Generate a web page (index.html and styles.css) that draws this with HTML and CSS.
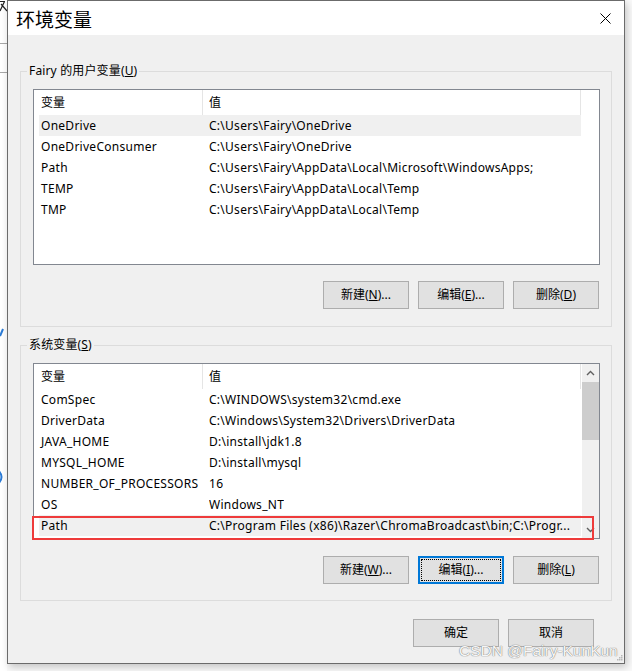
FILE: index.html
```html
<!DOCTYPE html>
<html lang="zh-CN">
<head>
<meta charset="utf-8">
<title>环境变量</title>
<link rel="stylesheet" href="styles.css">
</head>
<body>
<div class="desk">
  <div class="behind">
    <svg class="behind-glyph" width="7" height="12" viewBox="0 0 7 12"><path d="M0 1.5 H5 M4.5 1.5 L0 11 M1 4 L7 11" stroke="#222" stroke-width="1.2" fill="none"/></svg>
    <div class="behind-line l1"></div>
    <div class="behind-line l2"></div>
    <svg class="behind-blue b1" width="4" height="10" viewBox="0 0 4 10"><path d="M0 9 L3 2" stroke="#2b7bd6" stroke-width="2" fill="none"/></svg>
    <svg class="behind-blue b2" width="6" height="14" viewBox="0 0 6 14"><path d="M1 1 Q6 7 1 13" stroke="#2b7bd6" stroke-width="2" fill="none"/></svg>
  </div>
  <div class="window">
    <div class="titlebar">
      <span class="title">环境变量</span>
      <svg class="close" width="11" height="11" viewBox="0 0 11 11"><path d="M0.5 0.5 L10.5 10.5 M10.5 0.5 L0.5 10.5" stroke="#000" stroke-width="1" fill="none"/></svg>
    </div>
    <div class="content">
      <fieldset class="group">
        <legend>Fairy 的用户变量(<u>U</u>)</legend>
        <div class="list">
          <div class="list-main">
            <div class="list-head"><div class="hcell c1">变量</div><div class="hcell c2">值</div></div>
            <div class="row sel"><span class="name">OneDrive</span><span class="val">C:\Users\Fairy\OneDrive</span></div>
            <div class="row"><span class="name">OneDriveConsumer</span><span class="val">C:\Users\Fairy\OneDrive</span></div>
            <div class="row"><span class="name">Path</span><span class="val">C:\Users\Fairy\AppData\Local\Microsoft\WindowsApps;</span></div>
            <div class="row"><span class="name">TEMP</span><span class="val">C:\Users\Fairy\AppData\Local\Temp</span></div>
            <div class="row"><span class="name">TMP</span><span class="val">C:\Users\Fairy\AppData\Local\Temp</span></div>
          </div>
        </div>
        <div class="btns">
          <button class="btn">新建(<u>N</u>)...</button>
          <button class="btn">编辑(<u>E</u>)...</button>
          <button class="btn">删除(<u>D</u>)</button>
        </div>
      </fieldset>

      <fieldset class="group sys">
        <legend>系统变量(<u>S</u>)</legend>
        <div class="list">
          <div class="list-main">
            <div class="list-head"><div class="hcell c1">变量</div><div class="hcell c2">值</div></div>
            <div class="row"><span class="name">ComSpec</span><span class="val">C:\WINDOWS\system32\cmd.exe</span></div>
            <div class="row"><span class="name">DriverData</span><span class="val">C:\Windows\System32\Drivers\DriverData</span></div>
            <div class="row"><span class="name">JAVA_HOME</span><span class="val">D:\install\jdk1.8</span></div>
            <div class="row"><span class="name">MYSQL_HOME</span><span class="val">D:\install\mysql</span></div>
            <div class="row"><span class="name">NUMBER_OF_PROCESSORS</span><span class="val">16</span></div>
            <div class="row"><span class="name">OS</span><span class="val">Windows_NT</span></div>
            <div class="row sel"><span class="name">Path</span><span class="val">C:\Program Files (x86)\Razer\ChromaBroadcast\bin;C:\Progr...</span></div>
          </div>
          <div class="scroll">
            <div class="arrow"><svg width="9" height="6" viewBox="0 0 9 6"><path d="M1 5 L4.5 1.5 L8 5" stroke="#606060" stroke-width="1.4" fill="none"/></svg></div>
            <div class="thumb"></div>
            <div class="track"></div>
            <div class="arrow"><svg width="9" height="6" viewBox="0 0 9 6"><path d="M1 1 L4.5 4.5 L8 1" stroke="#606060" stroke-width="1.4" fill="none"/></svg></div>
          </div>
          <div class="mark"></div>
        </div>
        <div class="btns">
          <button class="btn">新建(<u>W</u>)...</button>
          <button class="btn focus">编辑(<u>I</u>)...</button>
          <button class="btn">删除(<u>L</u>)</button>
        </div>
      </fieldset>

      <div class="dialog-btns">
        <button class="btn">确定</button>
        <button class="btn">取消</button>
      </div>
    </div>
    <div class="watermark">CSDN @Fairy-KunKun</div>
    <svg class="grip" width="6" height="6" viewBox="0 0 6 6"><rect x="4" y="0" width="1.5" height="1.5" fill="#b8b8b8"/><rect x="2" y="2" width="1.5" height="1.5" fill="#b8b8b8"/><rect x="4" y="2" width="1.5" height="1.5" fill="#b8b8b8"/><rect x="0" y="4" width="1.5" height="1.5" fill="#b8b8b8"/><rect x="2" y="4" width="1.5" height="1.5" fill="#b8b8b8"/><rect x="4" y="4" width="1.5" height="1.5" fill="#b8b8b8"/></svg>
  </div>
</div>
</body>
</html>
```

FILE: styles.css
```css
* { box-sizing: border-box; }
html, body { margin: 0; padding: 0; }
body {
  width: 632px;
  height: 671px;
  overflow: hidden;
  background: #fafafa;
  font-family: "Noto Sans", "Noto Sans CJK SC", sans-serif;
  font-size: 12px;
  color: #000;
}
.desk {
  display: flex;
  height: 671px;
}
.behind {
  width: 7px;
  flex: none;
  position: relative;
  background: #fff;
}
.behind-glyph { position: absolute; left: 0; top: 0; }
.behind-line { position: absolute; left: 0; width: 7px; height: 1px; background: #a8a8a8; }
.behind-line.l1 { top: 43px; }
.behind-line.l2 { top: 72px; }
.behind-blue { position: absolute; left: 0; }
.behind-blue.b1 { top: 327px; }
.behind-blue.b2 { top: 470px; left: -2px; }

.window {
  width: 618px;
  height: 664px;
  flex: none;
  border: 1px solid #6b6b6b;
  background: #f0f0f0;
  display: flex;
  flex-direction: column;
  position: relative;
  box-shadow: 2px 3px 8px rgba(0, 0, 0, 0.22);
}
.titlebar {
  height: 34px;
  flex: none;
  background: #fff;
  display: flex;
  align-items: center;
  justify-content: space-between;
  padding: 0 13px 0 8px;
}
.title {
  font-family: "Noto Sans CJK SC", sans-serif;
  font-size: 19px;
  line-height: 20px;
  margin-top: 2px;
}
.close { display: block; margin-top: 1px; }

.content {
  padding: 28px 12px 0;
  display: flex;
  flex-direction: column;
}
.group {
  margin: 0;
  min-width: 0;
  border: 1px solid #dcdcdc;
  padding: 10px 11px 17px 12px;
}
.group.sys { margin-top: 10px; padding-bottom: 16px; }
legend {
  padding: 0 2px;
  margin-left: -6px;
  line-height: 16px;
  height: 16px;
  letter-spacing: 0.15px;
}
u { text-decoration: underline; text-underline-offset: 1px; }

.list {
  height: 176px;
  border: 1px solid #828790;
  background: #fff;
  display: flex;
  position: relative;
  overflow: visible;
}
.list-main { width: 547px; flex: none; }
.list-head { display: flex; height: 25px; }
.hcell {
  display: flex;
  align-items: center;
  border-right: 1px solid #e5e5e5;
  padding-left: 7px;
  padding-bottom: 1px;
}
.hcell.c1 { width: 169px; }
.hcell.c2 { width: 378px; padding-left: 6px; }
.row {
  display: flex;
  align-items: center;
  height: 21px;
  margin-left: 5px;
  width: 542px;
  padding-left: 2px;
  white-space: nowrap;
  letter-spacing: 0.27px;
}
.row.sel { background: #f0f0f0; }
.name { width: 168px; flex: none; }
.val { overflow: hidden; }

.scroll {
  width: 17px;
  margin-left: auto;
  background: #f0f0f0;
  display: flex;
  flex-direction: column;
}
.arrow {
  height: 17px;
  display: flex;
  align-items: center;
  justify-content: center;
}
.arrow svg { display: block; }
.thumb { height: 58px; background: #cdcdcd; margin-top: 1px; }
.track { flex: 1; }

.mark {
  position: absolute;
  left: -2px;
  top: 152px;
  width: 562px;
  height: 24px;
  border: 2px solid #ee3b3b;
}

.btns {
  display: flex;
  justify-content: flex-end;
  gap: 9px;
  margin-top: 16px;
  padding-right: 1px;
}
.sys .btns { margin-top: 17px; }
.btn {
  width: 86px;
  height: 28px;
  padding: 0;
  margin: 0;
  border: 1px solid #adadad;
  background: #e1e1e1;
  font-family: inherit;
  font-size: 12px;
  color: #000;
  line-height: 16px;
  position: relative;
}
.btn.focus { border: 2px solid #0078d7; }
.btn.focus::after {
  content: "";
  position: absolute;
  inset: 1px;
  border: 1px dotted #000;
}
.dialog-btns {
  display: flex;
  justify-content: flex-end;
  gap: 9px;
  margin-top: 18px;
  padding-right: 18px;
}

.watermark {
  position: absolute;
  left: 451px;
  top: 641px;
  font-family: "Liberation Sans", Arial, sans-serif;
  font-size: 15.5px;
  line-height: 18px;
  color: rgba(255, 255, 255, 0.95);
  text-shadow: 0 0 1px #7a7a7a, 0 0 1px #7a7a7a;
  white-space: nowrap;
}
.grip { position: absolute; right: 1px; bottom: 2px; }
```
